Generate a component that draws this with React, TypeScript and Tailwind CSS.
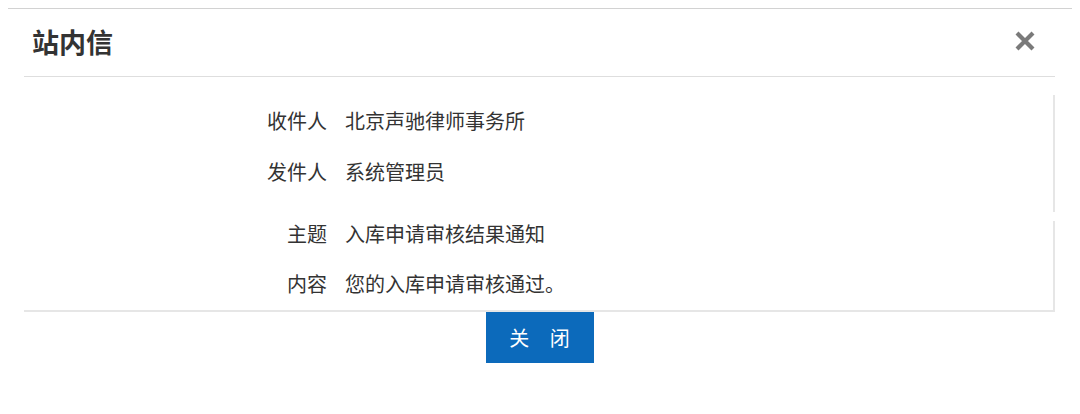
const font = { fontFamily: '"Noto Sans CJK SC", "Noto Sans", sans-serif' };

function Row({ label, value, className = "" }: { label: string; value: string; className?: string }) {
  return (
    <div className={`flex h-[26px] items-center text-[20px] leading-none text-[#333] ${className}`}>
      <div className="w-[303px] text-right">{label}</div>
      <div className="pl-[18px]">{value}</div>
    </div>
  );
}

export default function App() {
  return (
    <div className="h-[414px] w-[1080px] bg-white px-[8px] pt-[8px]" style={font}>
      <div className="border-t border-[#d2d2d2]">
        <div className="ml-[16px] mr-[17px]">
          {/* header */}
          <div className="flex h-[68px] items-center justify-between border-b border-[#dedede] pl-[8px] pr-[19px]">
            <h1 className="text-[27px] font-bold text-[#333]">站内信</h1>
            <svg width="22" height="22" viewBox="0 0 22 22" className="mt-[-4px]">
              <path d="M3 3 L19 19 M19 3 L3 19" stroke="#7a7a7a" strokeWidth="4.2" strokeLinecap="butt" />
            </svg>
          </div>

          {/* receiver / sender */}
          <div className="mt-[18px] border-r-2 border-[#e6e6e6] pt-[13px] pb-[27px]">
            <Row label="收件人" value="北京声驰律师事务所" />
            <Row label="发件人" value="系统管理员" className="mt-[25px]" />
          </div>

          {/* subject / content */}
          <div className="mt-[9px] border-r-2 border-b-2 border-[#e6e6e6] pb-[13px]">
            <Row label="主题" value="入库申请审核结果通知" />
            <Row label="内容" value="您的入库申请审核通过。" className="mt-[24px]" />
          </div>
        </div>

        <div className="flex justify-center">
          <button className="ml-[-1px] h-[51px] w-[108px] bg-[#0c6abb] text-[20px] text-white tracking-[8px] pl-[8px]">
            关 闭
          </button>
        </div>
      </div>
    </div>
  );
}
